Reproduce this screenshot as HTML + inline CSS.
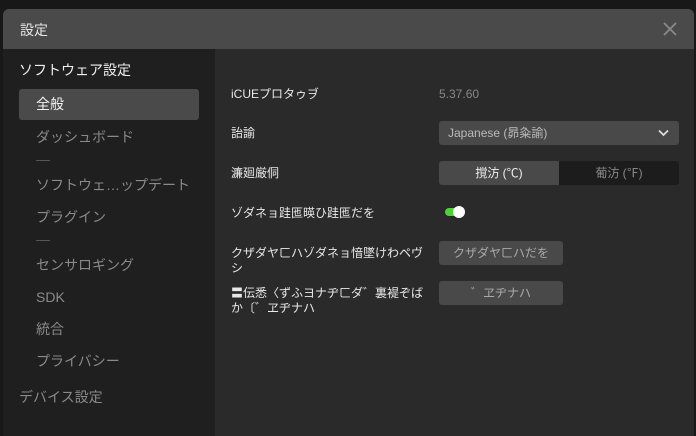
<!DOCTYPE html>
<html><head><meta charset="utf-8"><style>
*{margin:0;padding:0;box-sizing:border-box}
body{width:696px;height:436px;background:#181818;overflow:hidden;font-family:"Liberation Sans","Noto Sans CJK JP",sans-serif;position:relative}
.dlg{position:absolute;left:3px;top:9px;width:691px;height:427px;background:#2a2a2a;border-radius:6px 6px 0 0;overflow:hidden}
.hdr{height:40px;background:#4a4a4a;color:#e6e6e6;font-size:14px;line-height:42px;padding-left:17px}
.x{position:absolute;right:15px;top:11px;width:18px;height:18px}
.side{position:absolute;left:0;top:40px;width:212px;bottom:0;background:#1f1f1f}
.t{position:absolute;font-size:14px;white-space:nowrap;line-height:20px}
.sel{position:absolute;left:16px;top:40px;width:180px;height:31px;background:#4a4a4a;border-radius:3px}
.g{color:#8a8a8a}
.dash{position:absolute;left:33px;width:14px;height:1px;background:#555}
.l{position:absolute;left:228px;font-size:12px;color:#e8e8e8;line-height:15px}
.box{position:absolute;left:436px;background:#494949;border-radius:3px;color:#aaa;font-size:12px;text-align:center}
</style></head><body>
<div class="dlg">
<div class="hdr">設定</div>
<svg class="x" viewBox="0 0 18 18"><path d="M3 3L15 15M15 3L3 15" stroke="#8a8a8a" stroke-width="1.8"/></svg>
<div class="side">
<div class="t" style="left:16px;top:11px;color:#f0f0f0">ソフトウェア設定</div>
<div class="sel"></div>
<div class="t" style="left:33px;top:45px;color:#f0f0f0">全般</div>
<div class="t g" style="left:33px;top:78px">ダッシュボード</div>
<div class="dash" style="top:111px"></div>
<div class="t g" style="left:33px;top:126px">ソフトウェ…ップデート</div>
<div class="t g" style="left:33px;top:158px">プラグイン</div>
<div class="dash" style="top:191px"></div>
<div class="t g" style="left:33px;top:206px">センサロギング</div>
<div class="t g" style="left:33px;top:238px">SDK</div>
<div class="t g" style="left:33px;top:270px">統合</div>
<div class="t g" style="left:33px;top:302px">プライバシー</div>
<div class="t g" style="left:16px;top:338px">デバイス設定</div>
</div>
<div class="l" style="top:78px">iCUEプロタゥヺ</div>
<div class="l" style="top:78px;left:436px;color:#888">5.37.60</div>
<div class="l" style="top:117px">詒諭</div>
<div class="box" style="top:112px;width:240px;height:24px;text-align:left;padding-left:9px;line-height:24px;color:#bbb">Japanese (昴粂諭)<svg style="position:absolute;right:10px;top:8px" width="11" height="8" viewBox="0 0 11 8"><path d="M1 1.5L5.5 6L10 1.5" stroke="#ddd" stroke-width="1.8" fill="none"/></svg></div>
<div class="l" style="top:157px">濂廻厳侗</div>
<div class="box" style="top:152px;width:240px;height:24px;background:#1c1c1c;line-height:24px"><div style="position:absolute;left:0;top:0;width:120px;height:24px;background:#494949;color:#f0f0f0;border-radius:3px 0 0 3px">撹汸 (℃)</div><div style="position:absolute;left:120px;width:120px;color:#888">葡汸 (℉)</div></div>
<div class="l" style="top:197px">ゾダネョ跬匜暎ひ跬匜だを</div>
<div style="position:absolute;left:442px;top:199px;width:14px;height:8px;background:#4cd137;border-radius:4px"></div>
<div style="position:absolute;left:450px;top:197px;width:12px;height:12px;background:#fff;border-radius:6px"></div>
<div class="l" style="top:237px;width:196px">クザダヤㄈハゾダネョ愔墜けわペヴシ</div>
<div class="box" style="top:232px;width:124px;height:24px;line-height:24px">クザダヤㄈハだを</div>
<div class="l" style="top:277px;width:196px">〓伝悉〈ずふヨナヂㄈダ゛裏褆ぞばか〔゛ヱヂナハ</div>
<div class="box" style="top:272px;width:124px;height:24px;line-height:24px">゛ヱヂナハ</div>
</div>
</body></html>
